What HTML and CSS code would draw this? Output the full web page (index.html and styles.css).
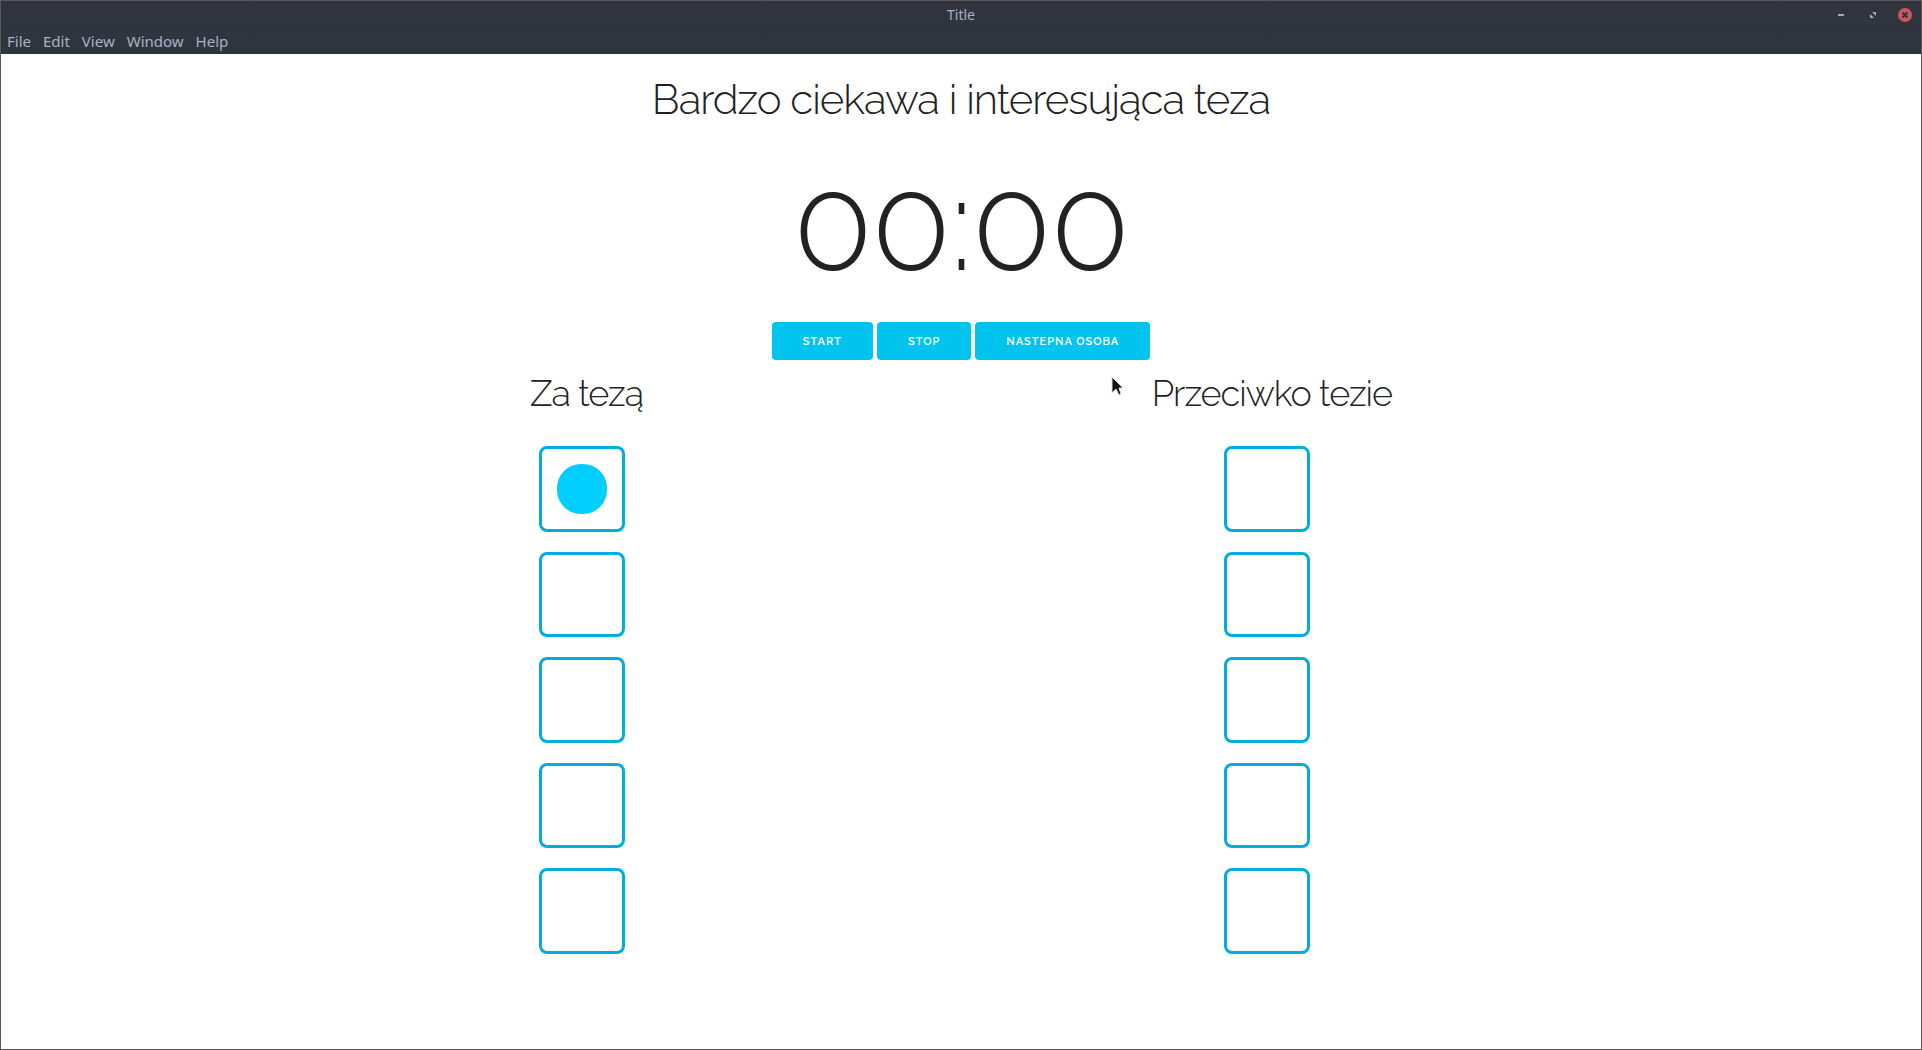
FILE: index.html
```html
<!DOCTYPE html>
<html lang="pl">
<head>
<meta charset="utf-8">
<title>Title</title>
<link rel="stylesheet" href="styles.css">
</head>
<body>
<div class="window">
  <header class="chrome">
    <div class="titlebar">
      <span class="window-title">Title</span>
      <div class="window-controls">
        <button class="control" type="button" aria-label="Minimize"><svg width="14" height="14" viewBox="0 0 14 14"><path d="M4 6h6v2H4z" fill="#a3abb9"/></svg></button>
        <button class="control" type="button" aria-label="Restore"><svg width="14" height="14" viewBox="0 0 14 14"><path d="M6 4h4v4zM4 6l4 4H4z" fill="#a3abb9"/></svg></button>
        <button class="control" type="button" aria-label="Close"><svg width="14" height="14" viewBox="0 0 14 14"><circle cx="7" cy="7" r="7" fill="#cc575d"/><path d="M4.500 4.500l5 5M9.500 4.500l-5 5" stroke="#2f343f" stroke-width="2"/></svg></button>
      </div>
    </div>
    <nav class="menubar">
      <a href="#file">File</a>
      <a href="#edit">Edit</a>
      <a href="#view">View</a>
      <a href="#window">Window</a>
      <a href="#help">Help</a>
    </nav>
  </header>
  <main class="debate">
    <h1 class="thesis">Bardzo ciekawa i interesująca teza</h1>
    <div class="timer" role="timer">00:00</div>
    <div class="actions">
      <button class="button" type="button">START</button>
      <button class="button" type="button">STOP</button>
      <button class="button" type="button">NASTEPNA OSOBA</button>
      <svg class="cursor" width="14" height="22" viewBox="0 0 14 22"><path d="M1 1v16l4-4 3 6 2-1-2-6h4z" fill="#111" stroke="#ddd"/></svg>
    </div>
    <div class="sides">
      <section class="side side-for">
        <h2>Za tezą</h2>
        <div class="seats">
          <div class="seat"><span class="speaker"></span></div>
          <div class="seat"></div>
          <div class="seat"></div>
          <div class="seat"></div>
          <div class="seat"></div>
        </div>
      </section>
      <section class="side side-against">
        <h2>Przeciwko tezie</h2>
        <div class="seats">
          <div class="seat"></div>
          <div class="seat"></div>
          <div class="seat"></div>
          <div class="seat"></div>
          <div class="seat"></div>
        </div>
      </section>
    </div>
  </main>
</div>
</body>
</html>
```

FILE: styles.css
```css
* {
  box-sizing: border-box;
}

body {
  margin: 0;
  background: #fff;
  color: #222;
  font-family: Raleway, Lato, sans-serif;
}

.window {
  min-height: 100vh;
  border: 1px solid #5a5a5a;
}

.chrome {
  height: 53px;
  background: linear-gradient(#31343f, #2d3640);
  color: #a9b2c0;
  font: 15px/20px "Noto Sans", sans-serif;
}

.titlebar {
  display: grid;
  grid-template-columns: 1fr auto 1fr;
  align-items: center;
  height: 28px;
}

.window-title {
  grid-column: 2;
  font-size: 14px;
}

.window-controls {
  display: flex;
  justify-content: flex-end;
  gap: 18px;
  padding-right: 9px;
}

.control {
  display: flex;
  padding: 0;
  border: 0;
  background: none;
}

.menubar {
  display: flex;
  gap: 12px;
  padding: 2px 6px;
}

.menubar a {
  color: inherit;
  text-decoration: none;
}

.debate {
  display: flex;
  flex-direction: column;
  align-items: center;
  padding-top: 16px;
}

.thesis {
  margin: 0;
  font-size: 42px;
  line-height: 60px;
  font-weight: 300;
  letter-spacing: -1px;
}

.timer {
  margin: 18px 0 22px;
  font-size: 130px;
  line-height: 152px;
  font-weight: 300;
  letter-spacing: -1px;
}

.actions {
  position: relative;
  display: flex;
  gap: 4px;
}

.button {
  height: 38px;
  padding: 2px 31px 0;
  border: 0;
  border-radius: 4px;
  background: #00c3ee;
  color: #fff;
  font: 600 11px/36px Raleway, Lato, sans-serif;
  letter-spacing: 1px;
}

.cursor {
  position: absolute;
  left: 339px;
  top: 54px;
}

.sides {
  display: flex;
  justify-content: space-between;
  width: 45%;
  padding: 11px 1px 0;
}

.side h2 {
  margin: 0 0 31px;
  font-size: 36px;
  line-height: 44px;
  font-weight: 300;
  letter-spacing: -1px;
}

.seats {
  display: grid;
  grid-auto-rows: 1fr;
  gap: 20px;
  width: 86px;
  height: 508px;
}

.side-for .seats {
  margin-left: 9px;
}

.side-against .seats {
  margin-left: 72px;
}

.seat {
  display: grid;
  place-items: center;
  border: 3px solid #00addb;
  border-radius: 8px;
}

.speaker {
  width: 50px;
  height: 50px;
  border-radius: 24px;
  background: #00ceff;
}
```
